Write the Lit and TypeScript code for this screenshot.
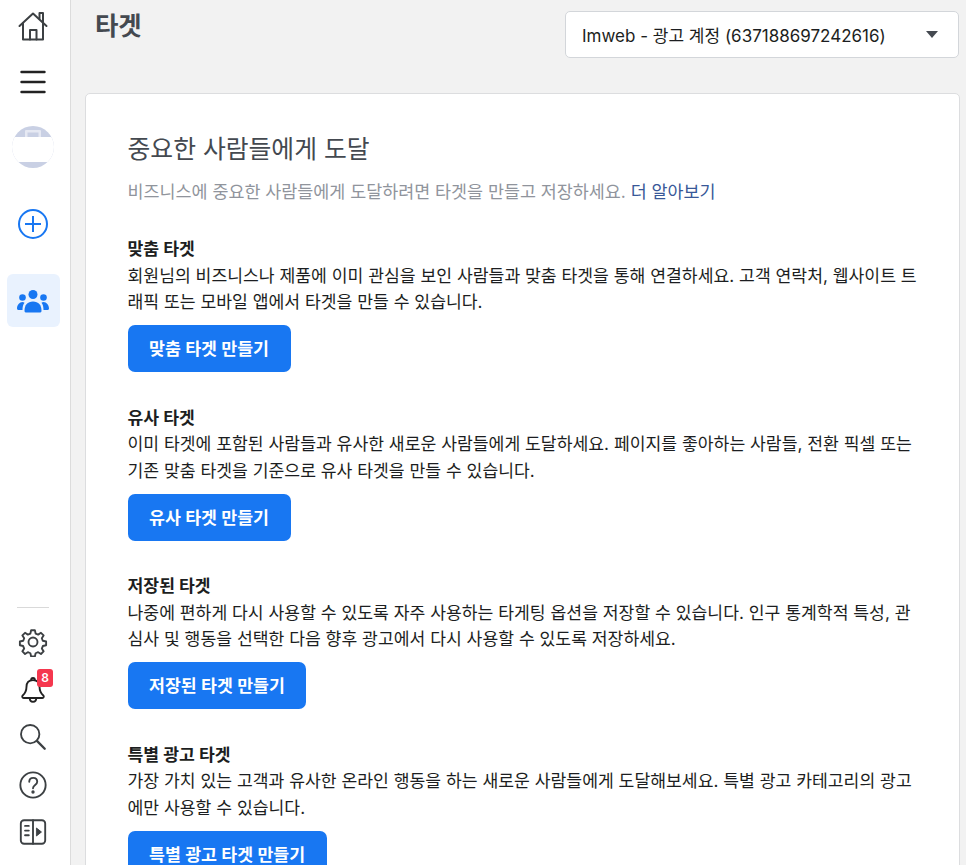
import { LitElement, html, css, svg } from "lit";
import { customElement } from "lit/decorators.js";

const sections = [
  { t: "맞춤 타겟", l: ["회원님의 비즈니스나 제품에 이미 관심을 보인 사람들과 맞춤 타겟을 통해 연결하세요. 고객 연락처, 웹사이트 트", "래픽 또는 모바일 앱에서 타겟을 만들 수 있습니다."], b: "맞춤 타겟 만들기" },
  { t: "유사 타겟", l: ["이미 타겟에 포함된 사람들과 유사한 새로운 사람들에게 도달하세요. 페이지를 좋아하는 사람들, 전환 픽셀 또는", "기존 맞춤 타겟을 기준으로 유사 타겟을 만들 수 있습니다."], b: "유사 타겟 만들기" },
  { t: "저장된 타겟", l: ["나중에 편하게 다시 사용할 수 있도록 자주 사용하는 타게팅 옵션을 저장할 수 있습니다. 인구 통계학적 특성, 관", "심사 및 행동을 선택한 다음 향후 광고에서 다시 사용할 수 있도록 저장하세요."], b: "저장된 타겟 만들기" },
  { t: "특별 광고 타겟", l: ["가장 가치 있는 고객과 유사한 온라인 행동을 하는 새로운 사람들에게 도달해보세요. 특별 광고 카테고리의 광고", "에만 사용할 수 있습니다."], b: "특별 광고 타겟 만들기" },
];

const ico = (body: unknown, w = 32) => html`<svg width=${w} height=${w} viewBox="0 0 32 32" fill="none" stroke="#3c4043" stroke-width="2" stroke-linecap="round" stroke-linejoin="round">${body}</svg>`;

@customElement("app-root")
export class AppRoot extends LitElement {
  static styles = css`
    :host { display: block; width: 966px; height: 865px; overflow: hidden; background: #f2f2f2; font-family: "Inter", "Noto Sans CJK KR", sans-serif; color: #1c1e21; }
    .page { display: flex; height: 865px; }
    .side { width: 71px; flex: none; box-sizing: border-box; background: #fff; border-right: 1px solid #dcdcdc; display: flex; flex-direction: column; align-items: center; padding: 10px 4px 0 0; }
    .side .i { height: 32px; display: flex; align-items: center; justify-content: center; }
    .mt-menu { margin-top: 24px; }
    .avatar { margin-top: 28px; width: 42px; height: 42px; border-radius: 50%; overflow: hidden; }
    .plus { margin-top: 40px; }
    .active { margin-top: 34px; width: 53px; height: 53px; background: #e9f2fe; border-radius: 6px; display: flex; align-items: center; justify-content: center; }
    .rule { margin-top: 280px; width: 32px; height: 1px; background: #d9d9d9; }
    .s1 { margin-top: 18px; }
    .s { margin-top: 15.5px; }
    .bell { position: relative; }
    .badge { position: absolute; left: 19px; top: -5px; width: 16px; height: 18px; background: #f5374e; color: #fff; border-radius: 3px; font-size: 12px; font-weight: 600; text-align: center; line-height: 18px; }
    .main { flex: 1; min-width: 0; padding: 0 6px 0 14px; display: flex; flex-direction: column; }
    .top { height: 93px; flex: none; display: flex; justify-content: space-between; align-items: flex-start; padding: 0 1px 0 10px; }
    h1 { margin: 8px 0 0; font-size: 25.5px; line-height: 36px; font-weight: 600; color: #444950; letter-spacing: -0.3px; }
    .select { margin-top: 11px; width: 394px; height: 47px; box-sizing: border-box; background: #fff; border: 1px solid #d3d6da; border-radius: 5px; display: flex; align-items: center; justify-content: space-between; padding: 0 20px 0 16px; font-size: 17px; color: #1c1e21; }
    .caret { width: 0; height: 0; border-left: 6.5px solid transparent; border-right: 6.5px solid transparent; border-top: 7px solid #444950; }
    .card { flex: none; background: #fff; border: 1px solid #dcdddf; border-radius: 5px; padding: 37px 40px 0 41.5px; height: 900px; box-sizing: border-box; }
    h2 { margin: 0; font-size: 24.8px; line-height: 36px; font-weight: 400; color: #444950; }
    .sub { margin: 12px 0 0; font-size: 17.4px; line-height: 26px; color: #90949c; }
    .sub a { color: #385898; text-decoration: none; }
    .sec { margin-top: 31px; }
    .sec + .sec { margin-top: 32.6px; }
    .sec h3 { margin: 0; font-size: 17.2px; line-height: 26.5px; font-weight: 700; color: #1c1e21; }
    .sec p { margin: 0; font-size: 17.2px; line-height: 26.5px; color: #1c1e21; white-space: nowrap; }
    .btn { margin-top: 9.5px; display: block; height: 47px; padding: 0 21.5px; background: #1877f2; color: #fff; border: 0; border-radius: 7px; font: 600 17.3px/47px "Inter", "Noto Sans CJK KR", sans-serif; }
  `;

  render() {
    return html`<div class="page">
      <nav class="side">
        <div class="i">${ico(svg`<path d="M2.500 16 16 3.500 29.500 16"/><path d="M6 13.500V29.500h20V13.500"/><path d="M13 29.500V20h6.500v9.500"/><path d="M22.500 8.500V3h3.500v9"/>`)}</div>
        <div class="i mt-menu">${ico(svg`<path d="M4.500 6h23M4.500 16h23M4.500 26h23" stroke="#222" stroke-width="2.400"/>`)}</div>
        <div class="avatar"><svg width="42" height="42" viewBox="0 0 42 42"><rect width="42" height="42" fill="#c9d0e4"/><rect x="13" y="4" width="16" height="8" rx="1" fill="#e6e9f3"/><rect x="15.500" y="6.500" width="11" height="5" fill="#c9d0e4"/><rect x="0" y="11" width="42" height="25" fill="#fff"/></svg></div>
        <div class="i plus"><svg width="32" height="32" viewBox="0 0 32 32" fill="none" stroke="#1877f2" stroke-width="2"><circle cx="16" cy="16" r="14"/><path d="M16 8v16M8 16h16"/></svg></div>
        <div class="active"><svg width="32" height="24" viewBox="0 0 32 24" fill="#1877f2"><circle cx="16" cy="5.500" r="4.500"/><circle cx="5.500" cy="8.500" r="3.300"/><circle cx="26.500" cy="8.500" r="3.300"/><path d="M7.500 22c0-6 3-9.500 8.500-9.500s8.500 3.500 8.500 9.500c0 1-1 1.500-2 1.500H9.500c-1 0-2-.5-2-1.500z"/><path d="M5.500 13c-3 0-5.500 3-5.500 6.500 0 1 1 1.500 2 1.500h3.500c0-3 .5-5.500 2-7.300-.6-.4-1.300-.7-2-.7zM26.500 13c3 0 5.500 3 5.500 6.500 0 1-1 1.500-2 1.500h-3.500c0-3-.5-5.500-2-7.300.6-.4 1.300-.7 2-.7z"/></svg></div>
        <div class="rule"></div>
        <div class="i s1">${ico(svg`<circle cx="16" cy="16" r="4.800"/><path d="M14 3.500h4l.8 3.500 2.700 1.100 3-1.900 2.800 2.800-1.900 3 1.100 2.700 3.500.8v4l-3.500.8-1.100 2.700 1.900 3-2.800 2.800-3-1.900-2.700 1.100-.8 3.500h-4l-.8-3.500-2.700-1.100-3 1.900-2.800-2.800 1.900-3-1.100-2.700-3.500-.8v-4l3.500-.8 1.100-2.700-1.900-3 2.800-2.800 3 1.900 2.700-1.100z"/>`, 30)}</div>
        <div class="i s bell">${ico(svg`<path d="M16 5.500c-4.800 0-7 3-7 7.500 0 5-2 7-4 8.800-1 1-.5 2.700 1 2.700h20c1.500 0 2-1.700 1-2.700-2-1.800-4-3.800-4-8.800 0-4.500-2.200-7.500-7-7.500z" stroke="#222"/><path d="M12.500 24.500c0 2.800 1.500 4 3.500 4s3.500-1.200 3.500-4" stroke="#222"/><path d="M14 5.500c0-3 4-3 4 0" stroke="#222"/>`, 30)}<span class="badge">8</span></div>
        <div class="i s">${ico(svg`<circle cx="13" cy="13" r="9.800"/><path d="M20.200 20.200 28.500 28.500" stroke-width="2.500"/>`, 30)}</div>
        <div class="i s">${ico(svg`<circle cx="16" cy="16" r="13.500"/><path d="M12 12.500c0-5.500 8.500-5.500 8.500 0 0 3.500-4.500 3.500-4.500 7"/><circle cx="16" cy="23.500" r=".8" fill="#3c4043"/>`, 30)}</div>
        <div class="i s">${ico(svg`<rect x="3" y="3.500" width="26" height="25" rx="3.500"/><path d="M16 3.500v25"/><path d="M7.500 9.500h4M7.500 14.500h4M7.500 19.500h4" /><path d="M20 12l5 4-5 4z" fill="#3c4043" stroke-width="1"/>`, 30)}</div>
      </nav>
      <main class="main">
        <div class="top">
          <h1>타겟</h1>
          <div class="select"><span>Imweb - 광고 계정 (637188697242616)</span><span class="caret"></span></div>
        </div>
        <section class="card">
          <h2>중요한 사람들에게 도달</h2>
          <p class="sub">비즈니스에 중요한 사람들에게 도달하려면 타겟을 만들고 저장하세요. <a>더 알아보기</a></p>
          ${sections.map(s => html`<div class="sec"><h3>${s.t}</h3>${s.l.map(x => html`<p>${x}</p>`)}<button class="btn">${s.b}</button></div>`)}
        </section>
      </main>
    </div>`;
  }
}
